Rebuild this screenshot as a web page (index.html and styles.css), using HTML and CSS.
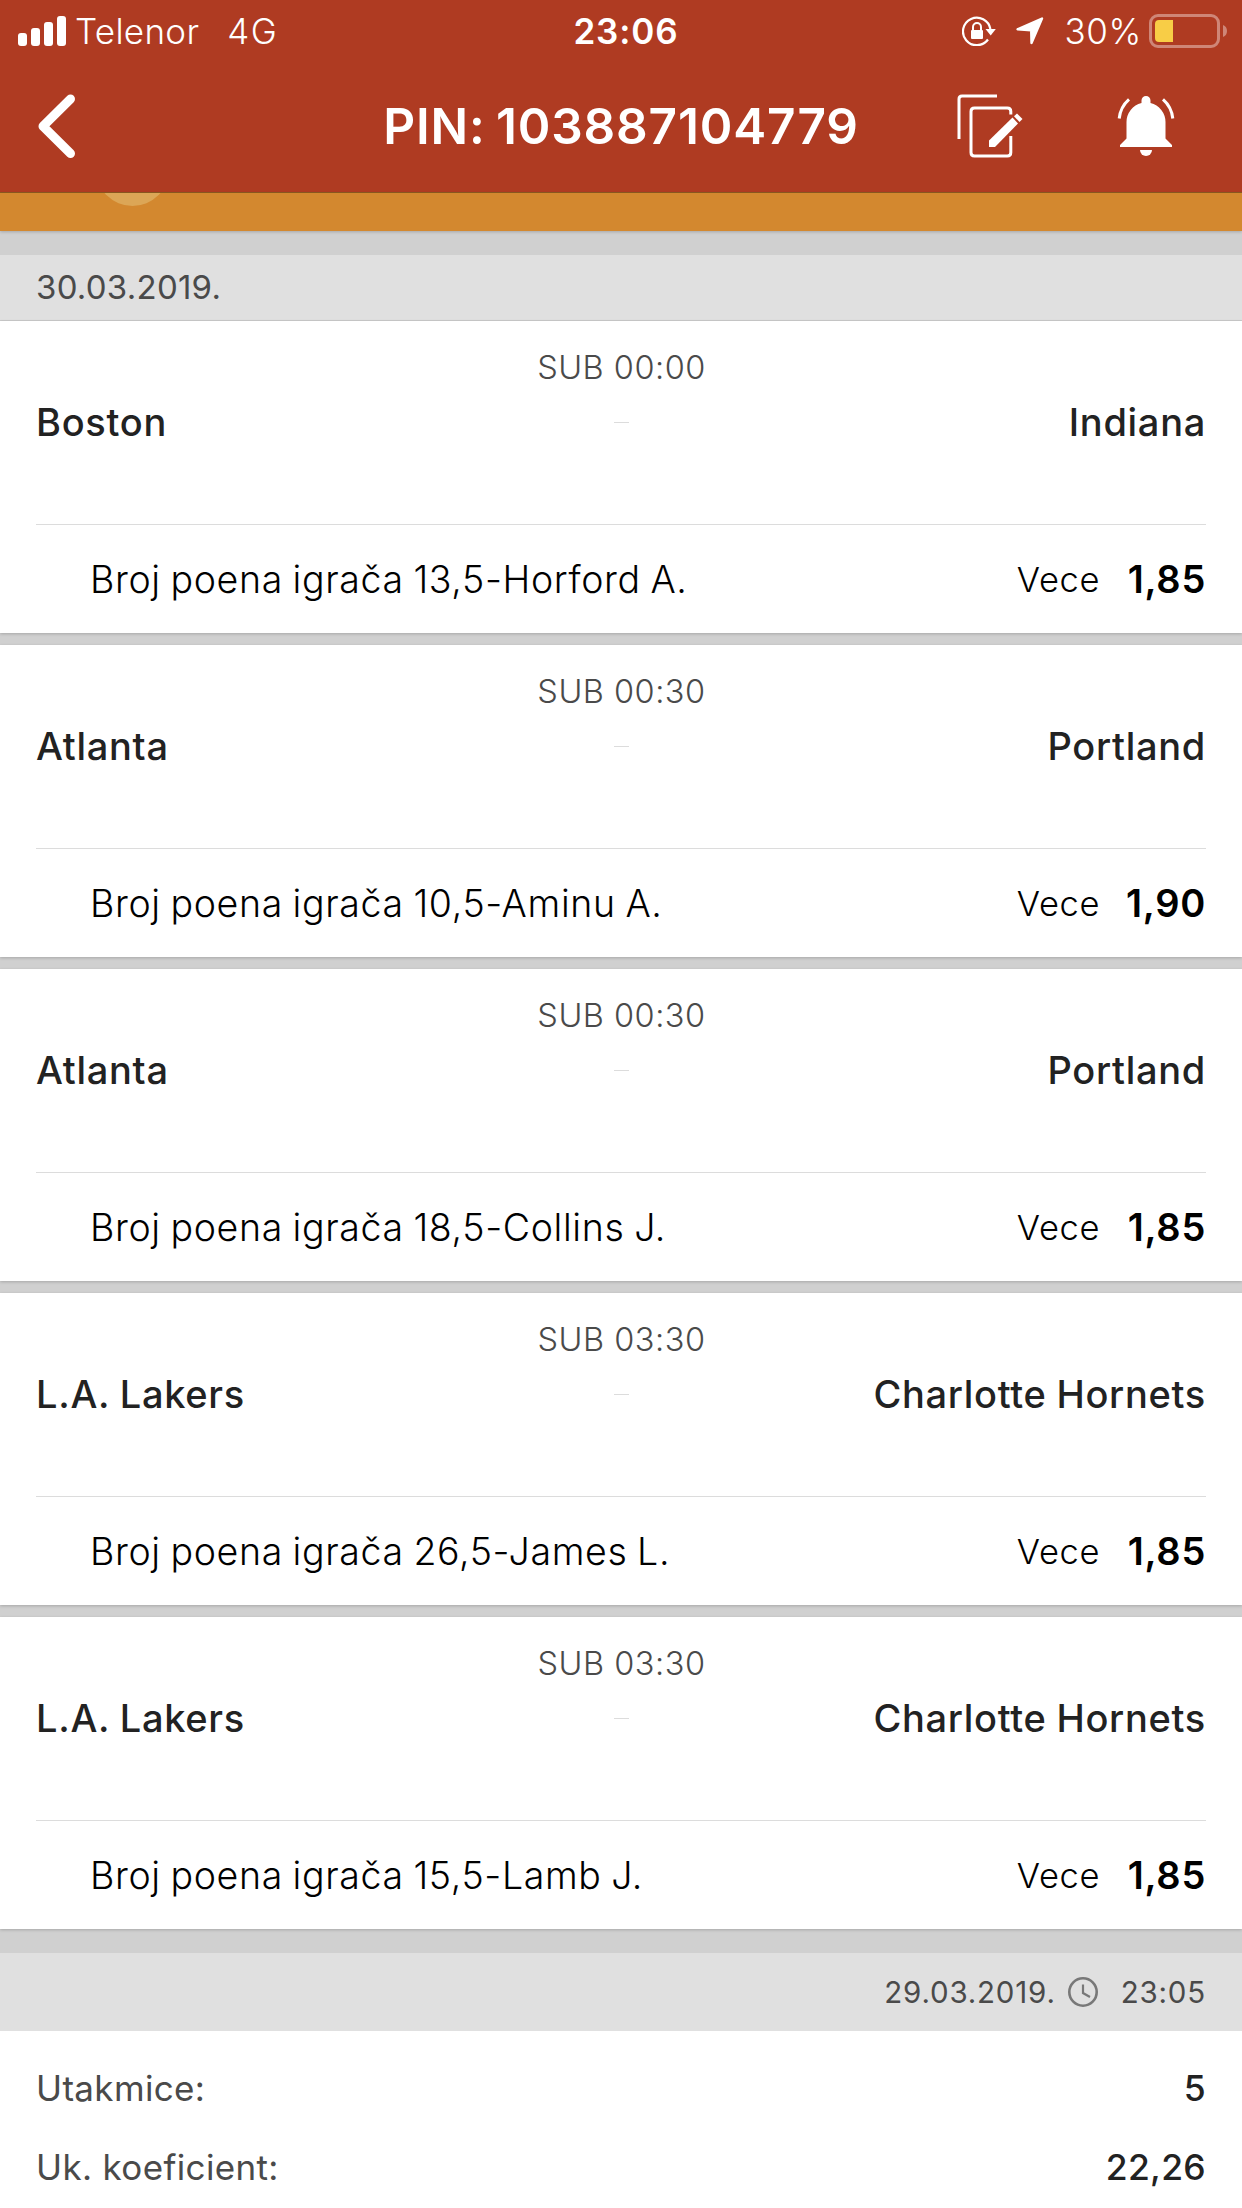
FILE: index.html
```html
<!DOCTYPE html>
<html lang="sr">
<head>
    <meta charset="UTF-8">
    <meta name="viewport" content="width=device-width, initial-scale=1.0">
    <title>PIN: 103887104779</title>
    <link rel="stylesheet" href="styles.css">
</head>
<body>

    <header class="header">
        <div class="status-bar">
            <div class="status-left">
                <svg class="signal" width="48" height="30" viewBox="0 0 48 30" fill="#fff">
                    <rect x="0" y="17" width="9" height="13" rx="3"/>
                    <rect x="13" y="12" width="9" height="18" rx="3"/>
                    <rect x="26" y="6" width="9" height="24" rx="3"/>
                    <rect x="39" y="0" width="9" height="30" rx="3"/>
                </svg>
                <span class="carrier">Telenor</span>
                <span class="network">4G</span>
            </div>
            <div class="clock">23:06</div>
            <div class="status-right">
                <svg class="lock" width="34" height="30" viewBox="0 0 34 30">
                    <path d="M26 23.5 A13.8 13.8 0 1 1 28.4 13" fill="none" stroke="#fff" stroke-width="2.2"/>
                    <path d="M23.5 13 H33.8 L28.7 19.5 Z" fill="#fff"/>
                    <rect x="9" y="14" width="12" height="9" rx="1" fill="#fff"/>
                    <path d="M11 15 V11 A4 4 0 0 1 19 11 V15" fill="none" stroke="#fff" stroke-width="2"/>
                </svg>
                <svg class="location" width="28" height="28" viewBox="0 0 28 28">
                    <path d="M26 1.5 L15.5 26 L15.2 13.2 L1.5 12.3 Z" fill="#fff" stroke="#fff" stroke-width="2.4" stroke-linejoin="round"/>
                </svg>
                <span class="percent">30%</span>
                <svg class="battery" width="78" height="34" viewBox="0 0 78 34">
                    <rect x="1.5" y="1.5" width="68" height="31" rx="7.5" fill="none" stroke="#cf8677" stroke-width="3"/>
                    <path d="M24 6 V28 H10 A4 4 0 0 1 6 24 V10 A4 4 0 0 1 10 6 Z" fill="#f8cd46"/>
                    <path d="M74 11 Q78 12.5 78 17 Q78 21.5 74 23 Z" fill="#cf8677"/>
                </svg>
            </div>
        </div>

        <div class="nav-bar">
            <svg class="back" width="38" height="64" viewBox="0 0 38 64" fill="none" stroke="#fff" stroke-width="9" stroke-linecap="round" stroke-linejoin="round">
                <path d="M32.5 5 L5 32.3 L32.5 59.5"/>
            </svg>
            <h1 class="title">PIN: 103887104779</h1>
            <div class="nav-actions">
                <svg class="edit" width="66" height="64" viewBox="0 0 66 64">
                    <path d="M2 45 V5 Q2 2 5 2 H40" fill="none" stroke="#fff" stroke-width="3"/>
                    <path d="M53.8 20.5 V17.5 Q53.8 14 50.3 14 H17.5 Q14 14 14 17.5 V58.5 Q14 62 17.5 62 H50.3 Q53.8 62 53.8 58.5 V42" fill="none" stroke="#fff" stroke-width="3"/>
                    <path d="M32 53 V46.5 L55.5 23.5 L61 29.5 L38 53 Z" fill="#fff"/>
                    <path d="M57 22.3 L60 19.5 L65.5 25 L62.5 28 Z" fill="#fff"/>
                </svg>
                <svg class="bell" width="58" height="62" viewBox="0 0 58 62">
                    <path d="M24.5 8 V5.5 A4.5 4.5 0 0 1 33.5 5.5 V8 A19.5 19.5 0 0 1 48.5 27 V43.5 L55 50 V52 H3 V50 L9.5 43.5 V27 A19.5 19.5 0 0 1 24.5 8 Z" fill="#fff"/>
                    <path d="M23 55 H35 A6 6 0 0 1 23 55 Z" fill="#fff"/>
                    <path d="M2.2 23.5 Q3.3 12 12 4.3 M55.8 23.5 Q54.7 12 46 4.3" fill="none" stroke="#fff" stroke-width="3"/>
                </svg>
            </div>
        </div>
    </header>

    <div class="banner">
        <div class="banner-circle"></div>
    </div>

    <div class="date-bar">30.03.2019.</div>

    <main class="matches">
        <section class="match">
            <div class="match-time">SUB 00:00</div>
            <div class="teams">
                <span>Boston</span>
                <i class="dash"></i>
                <span>Indiana</span>
            </div>
            <div class="bet">
                <span class="bet-name">Broj poena igrača 13,5-Horford A.</span>
                <span class="pick">Vece</span>
                <span class="odds">1,85</span>
            </div>
        </section>

        <section class="match">
            <div class="match-time">SUB 00:30</div>
            <div class="teams">
                <span>Atlanta</span>
                <i class="dash"></i>
                <span>Portland</span>
            </div>
            <div class="bet">
                <span class="bet-name">Broj poena igrača 10,5-Aminu A.</span>
                <span class="pick">Vece</span>
                <span class="odds">1,90</span>
            </div>
        </section>

        <section class="match">
            <div class="match-time">SUB 00:30</div>
            <div class="teams">
                <span>Atlanta</span>
                <i class="dash"></i>
                <span>Portland</span>
            </div>
            <div class="bet">
                <span class="bet-name">Broj poena igrača 18,5-Collins J.</span>
                <span class="pick">Vece</span>
                <span class="odds">1,85</span>
            </div>
        </section>

        <section class="match">
            <div class="match-time">SUB 03:30</div>
            <div class="teams">
                <span>L.A. Lakers</span>
                <i class="dash"></i>
                <span>Charlotte Hornets</span>
            </div>
            <div class="bet">
                <span class="bet-name">Broj poena igrača 26,5-James L.</span>
                <span class="pick">Vece</span>
                <span class="odds">1,85</span>
            </div>
        </section>

        <section class="match">
            <div class="match-time">SUB 03:30</div>
            <div class="teams">
                <span>L.A. Lakers</span>
                <i class="dash"></i>
                <span>Charlotte Hornets</span>
            </div>
            <div class="bet">
                <span class="bet-name">Broj poena igrača 15,5-Lamb J.</span>
                <span class="pick">Vece</span>
                <span class="odds">1,85</span>
            </div>
        </section>
    </main>

    <div class="ticket-time">
        <span>29.03.2019.</span>
        <svg width="30" height="30" viewBox="0 0 30 30" fill="none" stroke="#787878">
            <circle cx="15" cy="15" r="13.7" stroke-width="2.6"/>
            <path d="M15 7.5 V16 L22 20" stroke-width="2.2"/>
        </svg>
        <span class="hour">23:05</span>
    </div>

    <div class="summary">
        <div class="summary-row">
            <span>Utakmice:</span>
            <strong>5</strong>
        </div>
        <div class="summary-row">
            <span>Uk. koeficient:</span>
            <strong>22,26</strong>
        </div>
    </div>

</body>
</html>
```
FILE: styles.css
```css
* {
    box-sizing: border-box;
}
body {
    margin: 0;
    height: 2208px;
    overflow: hidden;
    background-color: #d0d0d0;
    font-family: Inter, "Liberation Sans", sans-serif;
    color: #4a4a4a;
}
svg {
    display: block;
    flex: none;
}

/* Header */
.header {
    height: 193px;
    background-color: #af3b22;
    border-bottom: 1px solid #8d5a20;
    color: #fff;
}
.status-bar {
    display: grid;
    grid-template-columns: 1fr auto 1fr;
    align-items: center;
    height: 60px;
    padding: 0 15px 0 18px;
    font-size: 35px;
    line-height: 62px;
}
.status-left, .status-right {
    display: flex;
    align-items: center;
}
.status-right {
    justify-content: flex-end;
}
.carrier {
    margin-left: 9px;
    font-weight: 300;
    letter-spacing: 0.3px;
}
.network {
    margin-left: 28px;
    font-weight: 300;
    letter-spacing: 1.5px;
}
.clock {
    padding-left: 7px;
    font-weight: 600;
    letter-spacing: 0.9px;
}
.location {
    margin-left: 20px;
}
.percent {
    margin-left: 21px;
    font-weight: 300;
    letter-spacing: 0.6px;
}
.battery {
    margin-left: 7px;
}
.nav-bar {
    display: grid;
    grid-template-columns: 1fr auto 1fr;
    align-items: center;
    height: 132px;
    padding: 0 67px 0 38px;
}
.title {
    margin: 0;
    padding-left: 29px;
    font-size: 49.5px;
    font-weight: 600;
    line-height: 132px;
    letter-spacing: 0.85px;
    word-spacing: -3px;
}
.nav-actions {
    display: flex;
    align-items: center;
    justify-content: flex-end;
    gap: 94px;
}

/* Banner under the header */
.banner {
    height: 38px;
    padding-left: 96px;
    overflow: hidden;
    background-color: #d3882f;
}
.banner-circle {
    width: 73px;
    height: 73px;
    margin-top: -60px;
    border-radius: 50%;
    background-color: #dca656;
}

.date-bar {
    height: 66px;
    margin-top: 24px;
    padding-left: 36px;
    background-color: #e0e0e0;
    border-bottom: 1px solid #cbcbcb;
    font-size: 33px;
    line-height: 64px;
    letter-spacing: 0.25px;
}
.banner, .match {
    box-shadow: 0 1px 3px rgba(0, 0, 0, 0.2);
}

/* Matches */
.matches {
    display: flex;
    flex-direction: column;
    gap: 12px;
}
.match {
    height: 312px;
    padding: 27px 36px 0;
    background-color: #fff;
}
.match-time {
    padding-left: 1px;
    font-size: 32.5px;
    font-weight: 300;
    line-height: 40px;
    letter-spacing: 0.5px;
    text-align: center;
}
.teams {
    display: grid;
    grid-template-columns: 1fr 15px 1fr;
    align-items: center;
    height: 137px;
    padding-bottom: 68px;
    border-bottom: 1px solid #dcdcdc;
    color: #222;
    font-size: 38px;
    font-weight: 500;
    letter-spacing: 0.7px;
    word-spacing: -1px;
}
.teams span:last-child {
    text-align: right;
}
.dash {
    height: 1px;
    margin-top: 1px;
    background-color: #dcdcdc;
}
.bet {
    display: flex;
    align-items: center;
    padding-left: 54px;
    color: #000;
    line-height: 109px;
}
.bet-name {
    flex: 1;
    font-size: 37.5px;
    font-weight: 300;
    letter-spacing: 0.64px;
    word-spacing: -1.5px;
}
.pick {
    font-size: 34.5px;
    font-weight: 300;
    letter-spacing: 0.6px;
}
.odds {
    width: 106px;
    font-size: 38px;
    font-weight: 600;
    letter-spacing: 0.7px;
    text-align: right;
}

/* Ticket info */
.ticket-time {
    display: flex;
    align-items: center;
    justify-content: flex-end;
    height: 78px;
    margin-top: 24px;
    padding-right: 36px;
    background-color: #e0e0e0;
    font-size: 29.5px;
    letter-spacing: 0.8px;
}
.ticket-time svg {
    margin-left: 12px;
}
.hour {
    margin-left: 23px;
}
.summary {
    height: 200px;
    padding: 18px 36px 0;
    background-color: #fff;
}
.summary-row {
    display: flex;
    justify-content: space-between;
    font-size: 35px;
    line-height: 79px;
    letter-spacing: 0.35px;
}
.summary-row strong {
    color: #222;
    font-size: 35.5px;
    font-weight: 500;
    letter-spacing: 0.3px;
}
```
